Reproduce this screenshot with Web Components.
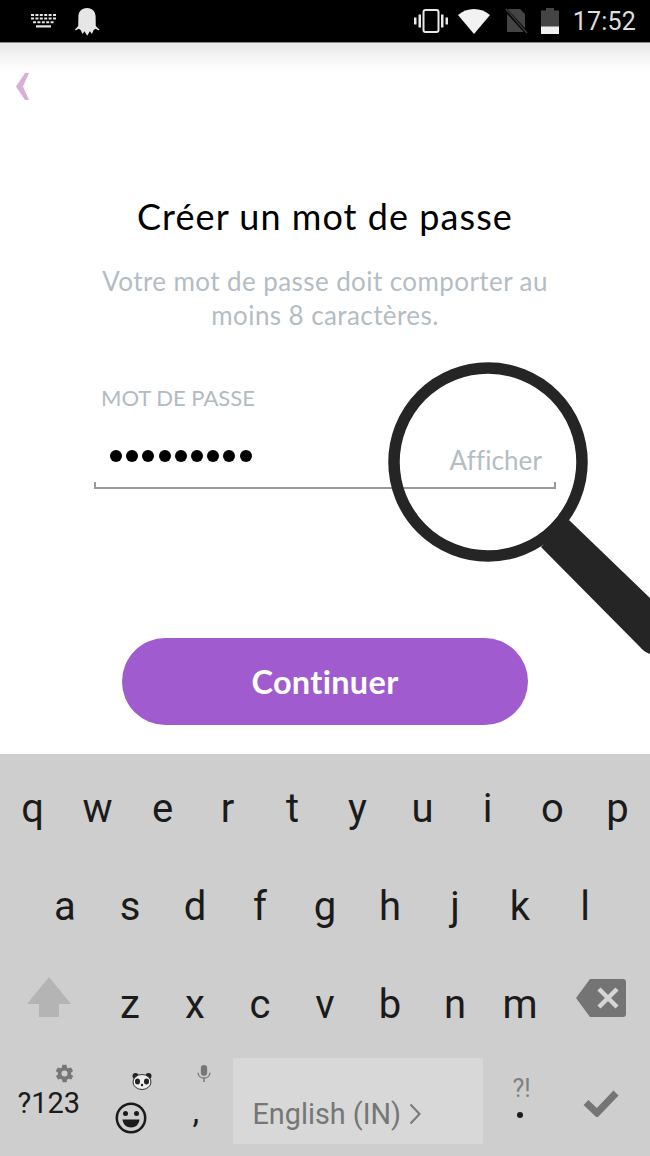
<!DOCTYPE html>
<html lang="fr">
<head>
<meta charset="utf-8">
<title>Créer un mot de passe</title>
<style>
   html, body { margin: 0; padding: 0; background: #fff; }
   body { width: 650px; height: 1156px; overflow: hidden; display: flex; flex-direction: column; }
</style>
</head>
<body>
<m-statusbar></m-statusbar>
<m-signup>
   <span slot="title">Créer un mot de passe</span>
   <span slot="hint">Votre mot de passe doit comporter au<br>moins 8 caractères.</span>
</m-signup>
<m-keyboard></m-keyboard>

<script>
class MStatusbar extends HTMLElement {
   constructor() {
      super();
      this.attachShadow({ mode: 'open' });
      this.shadowRoot.innerHTML = `
         <style>
            :host { display: flex; flex: none; height: 43px; background: #000; align-items: center; box-sizing: border-box; padding: 0 14px 0 31px; border-bottom: 1px solid #8a8a8a; }
            .left, .right { display: flex; align-items: center; }
            .left { gap: 18px; }
            .right { margin-left: auto; }
            svg { display: block; }
            .time { font: 25px Roboto, sans-serif; color: #dedede; margin-left: 14px; letter-spacing: .2px; }
         </style>
         <div class="left">
            <svg width="25" height="14" viewBox="0 0 25 14" fill="#e4e4e4">
               <path d="M0 0h3v2H0zM4.400 0h3v2h-3zM8.800 0h3v2h-3zM13.200 0h3v2h-3zM17.600 0h3v2h-3zM22 0h3v2h-3zM0 3.600h3v2H0zM4.400 3.600h3v2h-3zM8.800 3.600h3v2h-3zM13.200 3.600h3v2h-3zM17.600 3.600h3v2h-3zM22 3.600h3v2h-3zM2 7.200h3v2H2zM6.400 7.200h3v2h-3zM10.800 7.200h3v2h-3zM15.200 7.200h3v2h-3zM19.600 7.200h3v2h-3zM5 11.200h15v2.200H5z"/>
            </svg>
            <svg width="26" height="28" viewBox="0 0 26 28" fill="#e6e6e6" style="margin-top:2px">
               <path d="M13 0c5.500 0 8.500 3.600 8.600 8.500l.2 9.500 3.700 3.800-1 .5-3-1.600-1.800 1.300-1.800 4-2-2.800-2.700 4.600-2.700-4.600-2 2.800-1.800-4-1.800-1.300-3 1.600-1-.5L4.200 18l.2-9.500C4.500 3.600 7.500 0 13 0z"/>
            </svg>
         </div>
         <div class="right">
            <svg width="34" height="24" viewBox="0 0 34 24" style="margin-right:10px">
               <rect x="9.500" y="1" width="15" height="22" rx="2" fill="none" stroke="#e8e8e8" stroke-width="2"/>
               <path d="M4.500 5.500h2.500v13H4.500zM0 8.500h2.500v7H0zM27 5.500h2.500v13H27zM31.500 8.500H34v7h-2.500z" fill="#e8e8e8"/>
            </svg>
            <svg width="32" height="25" viewBox="0 0 32 25" style="margin-right:14px">
               <path d="M16 25L0 6C4.500 2.200 10 0 16 0s11.500 2.200 16 6z" fill="#f2f2f2"/>
            </svg>
            <svg width="24" height="26" viewBox="0 0 24 26" style="margin-right:13px">
               <path d="M3 1h13l5 5v18H3z" fill="#444"/>
               <path d="M1 1l22 24" stroke="#000" stroke-width="3.500"/>
               <path d="M2 1l21 24" stroke="#3a3a3a" stroke-width="1.500"/>
            </svg>
            <svg width="18" height="26" viewBox="0 0 18 26">
               <path d="M5 0h8v2.500h5V26H0V2.500h5z" fill="#444"/>
               <rect y="18.500" width="18" height="7.500" fill="#f0f0f0"/>
            </svg>
            <span class="time">17:52</span>
         </div>
      `;
   }
}

class MBack extends HTMLElement {
   constructor() {
      super();
      this.attachShadow({ mode: 'open' });
      this.shadowRoot.innerHTML = `
         <style>
            :host { display: block; width: 16px; height: 27px; }
            svg { display: block; }
         </style>
         <svg width="16" height="27" viewBox="0 0 16 27"><path d="M11 0L2 13.500 11 27h4L9 13.500 15 0z" fill="#d7afd8"/></svg>
      `;
   }
}

class MPassword extends HTMLElement {
   constructor() {
      super();
      this.attachShadow({ mode: 'open' });
      this.shadowRoot.innerHTML = `
         <style>
            :host { display: block; width: 462px; }
            .label { font: 22px Lato, sans-serif; color: #b2bac2; padding-left: 7px; line-height: 24px; }
            .row { display: flex; align-items: flex-start; justify-content: space-between; height: 57px; margin-top: 15px; padding: 0 14px 0 16px; box-sizing: border-box; }
            .dots { display: flex; gap: 4.200px; margin-top: 25px; }
            .dots i { width: 12px; height: 12px; border-radius: 50%; background: #000; }
            .show { font: 26px/32px Lato, sans-serif; color: #b4bcc4; margin-top: 19px; letter-spacing: .1px; }
            .line { height: 7px; border: 2px solid #999; border-top: 0; box-sizing: border-box; }
         </style>
         <div class="label">MOT DE PASSE</div>
         <div class="row">
            <div class="dots"><i></i><i></i><i></i><i></i><i></i><i></i><i></i><i></i><i></i></div>
            <span class="show">Afficher</span>
         </div>
         <div class="line"></div>
      `;
   }
}

class MLens extends HTMLElement {
   constructor() {
      super();
      this.attachShadow({ mode: 'open' });
      this.shadowRoot.innerHTML = `
         <style>
            :host { display: block; position: absolute; left: 380px; top: 310px; width: 270px; height: 310px; pointer-events: none; }
            svg { display: block; }
         </style>
         <svg width="270" height="310" viewBox="0 0 270 310">
            <path d="M161 194L260 294Q264 299 270 301V245L189 167z" fill="#252525"/>
            <circle cx="108" cy="109" r="94" fill="none" stroke="#252525" stroke-width="11.500"/>
         </svg>
      `;
   }
}

class MSignup extends HTMLElement {
   constructor() {
      super();
      this.attachShadow({ mode: 'open' });
      this.shadowRoot.innerHTML = `
         <style>
            :host { display: flex; flex-direction: column; align-items: center; flex: none; height: 711px; position: relative; box-sizing: border-box; padding-top: 149px;
               background: linear-gradient(#e9e9e9, #fff 28px); }
            m-back { position: absolute; left: 14px; top: 30px; }
            h1 { margin: 0; font: 400 36px Lato, sans-serif; color: #000; line-height: 48px; letter-spacing: 1.05px; }
            p { margin: 24px 0 0; font: 26px/34px Lato, sans-serif; color: #b4bcc4; text-align: center; letter-spacing: .42px; }
            m-password { margin-top: 54px; }
            button { margin-top: 149px; width: 406px; height: 87px; border: 0; padding: 0; border-radius: 44px; background: #a05cce; color: #fff; font: 700 32.500px Lato, sans-serif; letter-spacing: .3px; }
         </style>
         <m-back></m-back>
         <h1><slot name="title"></slot></h1>
         <p><slot name="hint"></slot></p>
         <m-password></m-password>
         <button>Continuer</button>
         <m-lens></m-lens>
      `;
   }
}

class MKey extends HTMLElement {
   constructor() {
      super();
      this.attachShadow({ mode: 'open' });
      this.shadowRoot.innerHTML = `
         <style>
            :host { display: flex; flex: none; width: 65px; height: 98px; align-items: center; justify-content: center; position: relative; font: 40px/1 Roboto, sans-serif; color: #1b1b1b; }
            :host([wide]) { width: 97.500px; }
         </style>
         <slot></slot>
      `;
   }
}

class MKeyboard extends HTMLElement {
   constructor() {
      super();
      this.attachShadow({ mode: 'open' });
      const row = (s) => [...s].map((c) => `<m-key>${c}</m-key>`).join('');
      this.shadowRoot.innerHTML = `
         <style>
            :host { display: block; flex: none; height: 402px; background: #cecece; box-sizing: border-box; padding-top: 6px; }
            .row { display: flex; height: 98px; }
            .home { padding-left: 32.500px; }
            svg { display: block; }
            .abs { position: absolute; }
            .sym { font-size: 29px; }
            .space { flex: 1; margin: 4px 5px 8px; background: #d8d8d8; border-radius: 2px; display: flex; align-items: center; padding: 25px 0 0 20px; box-sizing: border-box; font: 28.800px Roboto, sans-serif; color: #767676; gap: 8px; }
            .hintk { font: 25px Roboto, sans-serif; color: #808080; }
         </style>
         <div class="row">${row('qwertyuiop')}</div>
         <div class="row home">${row('asdfghjkl')}</div>
         <div class="row">
            <m-key wide>
               <svg width="44" height="40" viewBox="0 0 44 40" style="margin-bottom:16px"><path d="M22 0L44 27H32V40H12V27H0z" fill="#b4b4b4"/></svg>
            </m-key>
            ${row('zxcvbnm')}
            <m-key wide>
               <svg width="50" height="38" viewBox="0 0 50 38" style="margin-bottom:14px"><path d="M14 0H47a3 3 0 0 1 3 3V35a3 3 0 0 1-3 3H14L0 19z" fill="#747474"/><path d="M23 10L41 28M41 10L23 28" stroke="#d6d6d6" stroke-width="4.500"/></svg>
            </m-key>
         </div>
         <div class="row">
            <m-key wide>
               <span class="sym">?123</span>
               <svg class="abs" style="left:54px;top:9px" width="21" height="21" viewBox="0 0 24 24"><path d="M19.400 13c.1-.3.100-.7.100-1s0-.7-.1-1l2.100-1.600c.2-.2.300-.4.100-.6l-2-3.500c-.1-.2-.4-.3-.6-.2l-2.500 1c-.5-.4-1.100-.7-1.700-1l-.4-2.600c0-.3-.2-.4-.5-.4h-4c-.3 0-.5.100-.5.400l-.4 2.600c-.6.300-1.200.6-1.700 1l-2.500-1c-.2-.1-.5 0-.6.200l-2 3.500c-.1.200-.1.400.1.600L4.600 11c-.1.300-.1.700-.1 1s0 .7.100 1l-2.100 1.600c-.2.200-.3.400-.1.600l2 3.500c.1.200.4.300.6.200l2.500-1c.5.400 1.100.7 1.700 1l.4 2.600c0 .3.200.4.500.4h4c.3 0 .5-.1.500-.4l.4-2.600c.6-.3 1.200-.6 1.700-1l2.500 1c.2.100.5 0 .6-.2l2-3.500c.1-.2.100-.4-.1-.6zM12 15.500a3.500 3.500 0 1 1 0-7 3.500 3.500 0 0 1 0 7z" fill="#777"/></svg>
            </m-key>
            <m-key>
               <svg class="abs" style="left:34px;top:18px" width="20" height="18" viewBox="0 0 20 18">
                  <circle cx="3.500" cy="4" r="3" fill="#222"/><circle cx="16.500" cy="4" r="3" fill="#222"/>
                  <ellipse cx="10" cy="10" rx="9" ry="7.500" fill="#eee" stroke="#333"/>
                  <ellipse cx="5.500" cy="9.500" rx="2.500" ry="3" fill="#222"/><ellipse cx="14.500" cy="9.500" rx="2.500" ry="3" fill="#222"/>
                  <circle cx="10" cy="13" r="1.200" fill="#222"/>
               </svg>
               <svg class="abs" style="left:17px;top:48px" width="32" height="32" viewBox="0 0 32 32">
                  <circle cx="16" cy="16" r="14.200" fill="none" stroke="#1b1b1b" stroke-width="2.500"/>
                  <circle cx="10.500" cy="11.500" r="2.500" fill="#1b1b1b"/><circle cx="21.500" cy="11.500" r="2.500" fill="#1b1b1b"/>
                  <path d="M7.500 17.500h17c-.5 5-4 8-8.500 8s-8-3-8.500-8z" fill="#1b1b1b"/>
               </svg>
            </m-key>
            <m-key>
               <svg class="abs" style="left:33px;top:11px" width="16" height="18" viewBox="0 0 16 20"><rect x="4.500" y="0" width="7" height="12" rx="3.500" fill="#777"/><path d="M1.500 8.500c0 3.700 2.800 6 6.500 6s6.500-2.300 6.500-6" fill="none" stroke="#777" stroke-width="1.500"/><path d="M7.200 14h1.600v5H7.200z" fill="#777"/></svg>
               <span style="font-size:34px;position:absolute;left:30px;top:40px">,</span>
            </m-key>
            <div class="space">English (IN)<svg width="12" height="22" viewBox="0 0 12 22"><path d="M1.500 1.500L10.500 11 1.500 20.500" fill="none" stroke="#7c7c7c" stroke-width="2.200"/></svg></div>
            <m-key>
               <span class="hintk abs" style="left:25px;top:20px">?!</span>
               <span class="abs" style="left:29px;top:58px;width:6px;height:6px;border-radius:50%;background:#1b1b1b"></span>
            </m-key>
            <m-key wide>
               <svg width="36" height="28" viewBox="0 0 36 28"><path d="M3 13.500L14 24 33 4" fill="none" stroke="#757575" stroke-width="7"/></svg>
            </m-key>
         </div>
      `;
   }
}

customElements.define('m-statusbar', MStatusbar);
customElements.define('m-back', MBack);
customElements.define('m-password', MPassword);
customElements.define('m-lens', MLens);
customElements.define('m-signup', MSignup);
customElements.define('m-key', MKey);
customElements.define('m-keyboard', MKeyboard);
</script>
</body>
</html>
